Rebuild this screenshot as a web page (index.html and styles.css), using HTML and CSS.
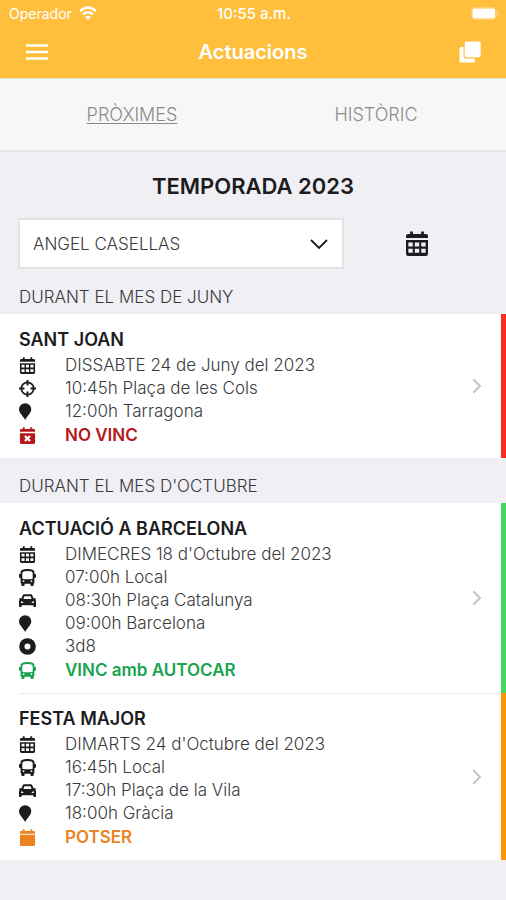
FILE: index.html
```html
<!DOCTYPE html>
<html lang="ca">
<head>
<meta charset="utf-8">
<meta name="viewport" content="width=device-width, initial-scale=1">
<title>Actuacions</title>
<link rel="stylesheet" href="styles.css">
</head>
<body>
<svg class="sprite" aria-hidden="true">
  <symbol id="calendar" viewBox="0 0 16 18">
    <path fill-rule="evenodd" d="M0 5V3.500Q0 2 1.500 2H3V.3h2V2h6V.3h2V2h1.500Q16 2 16 3.500V5zM0 6.500h16v10Q16 18 14.500 18h-13Q0 18 0 16.500zM1.700 8.300v2.900h3.200V8.300zm4.700 0v2.900h3.200V8.300zm4.700 0v2.900h3.200V8.300zM1.700 12.900v2.900h3.200v-2.900zm4.700 0v2.900h3.200v-2.900zm4.700 0v2.900h3.200v-2.900z"/>
  </symbol>
  <symbol id="calendar-plain" viewBox="0 0 16 18">
    <path d="M0 5V3.500Q0 2 1.500 2H3V.3h2V2h6V.3h2V2h1.500Q16 2 16 3.500V5zM0 6h16v10.500Q16 18 14.500 18h-13Q0 18 0 16.500z"/>
  </symbol>
  <symbol id="calendar-x" viewBox="0 0 16 18">
    <path d="M0 5V3.500Q0 2 1.500 2H3V.3h2V2h6V.3h2V2h1.500Q16 2 16 3.500V5zM0 6.500h16v10Q16 18 14.500 18h-13Q0 18 0 16.500z"/>
    <path d="M5.300 9.500l5.400 5.400m0-5.400l-5.400 5.400" stroke="#fff" stroke-width="2.400"/>
  </symbol>
  <symbol id="target" viewBox="0 0 18 18">
    <circle cx="9" cy="9" r="6.500" fill="none" stroke="currentColor" stroke-width="1.900"/>
    <path d="M9 0v5.800M9 12.200V18M0 9h5.800M12.200 9H18" stroke="currentColor" stroke-width="2.100"/>
  </symbol>
  <symbol id="pin" viewBox="0 0 14 18" preserveAspectRatio="xMinYMid">
    <path d="M6.500 18C5 14.500 0 11 0 6.700a6.500 6.500 0 0 1 13 0C13 11 8 14.500 6.500 18z"/>
  </symbol>
  <symbol id="bus" viewBox="0 0 18 18">
    <path fill-rule="evenodd" d="M9 0c4.500 0 7.300 1 7.300 3.300V5Q18 5 18 6.200v2.300q0 1.200-1.700 1.200v4.600q0 1-.8 1.300V17q0 1-1 1h-1.400q-1 0-1-1v-1.400H5.900V17q0 1-1 1H3.500q-1 0-1-1v-1.400q-.8-.3-.8-1.300V9.700Q0 9.700 0 8.500V6.200Q0 5 1.700 5V3.300C1.700 1 4.500 0 9 0zM3.500 4.500v5.700q2 .6 5.500.6t5.500-.6V4.500Q14.500 2 9 2T3.500 4.500zM4.800 12a.9.900 0 1 0 0 1.800.9.900 0 0 0 0-1.800zm8.400 0a.9.900 0 1 0 0 1.800.9.900 0 0 0 0-1.800z"/>
  </symbol>
  <symbol id="car" viewBox="0 0 18 18">
    <path fill-rule="evenodd" d="M5.500 2.500h7q1.200 0 1.700 1.200L15.400 6.700h1.700q.9 0 .7.800l-.4.900q.6.500.6 1.600v5.200q0 .8-.9.800h-1q-.9 0-.9-.8V14H2.800v1.200q0 .8-.9.800h-1Q0 16 0 15.200V10q0-1.100.6-1.600L.200 7.500Q0 6.700.9 6.700h1.700l1.200-3Q4.300 2.500 5.500 2.500zM5.700 4.500l-1 3h8.600l-1-3zM2 9.800l.3 1.900h2.600Q4.500 9.800 2 9.800zm14 0q-2.500 0-2.900 1.900h2.600z"/>
  </symbol>
  <symbol id="ring" viewBox="0 0 18 18">
    <circle cx="9" cy="9" r="6" fill="none" stroke="currentColor" stroke-width="5.600"/>
  </symbol>
  <symbol id="chevron" viewBox="0 0 10 16">
    <path d="M1.200 1.200L8 8l-6.800 6.800" fill="none" stroke="currentColor" stroke-width="2"/>
  </symbol>
</svg>

<header class="top">
  <div class="status">
    <span class="carrier">Operador
      <svg class="wifi" viewBox="0 0 18 14" aria-hidden="true"><path d="M1 5q8-7 16 0M4 8.300q5-4.300 10 0" fill="none" stroke="currentColor" stroke-width="2.400"/><path d="M6 11q3-2.600 6 0l-3 3z"/></svg>
    </span>
    <span class="clock">10:55 a.m.</span>
    <svg class="battery" viewBox="0 0 28 13" aria-hidden="true"><rect x=".5" y=".5" width="24.500" height="12" rx="3.500" fill="none" stroke="currentColor" opacity=".3"/><rect x="1.500" y="1.500" width="22.500" height="10" rx="2"/><path d="M26 4q2 1 2 2.500T26 9z" opacity=".4"/></svg>
  </div>
  <div class="nav">
    <button class="nav-button" type="button" aria-label="Menú">
      <svg class="burger" viewBox="0 0 24 16"><path d="M1 1.500h22M1 8h22M1 14.500h22" stroke="currentColor" stroke-width="2.400"/></svg>
    </button>
    <h1 class="nav-title">Actuacions</h1>
    <button class="nav-button end" type="button" aria-label="Copiar">
      <svg class="copy" viewBox="0 0 22 22"><path d="M2 6h2.500v9.500q0 2 2 2H16V20q0 1.500-1.500 1.500H2Q.500 21.500.500 20V7.500Q.500 6 2 6z"/><rect x="5.700" y=".5" width="16" height="15.800" rx="1.500"/></svg>
    </button>
  </div>
</header>

<nav class="tabs">
  <a class="tab active" href="#proximes">PRÒXIMES</a>
  <a class="tab" href="#historic">HISTÒRIC</a>
</nav>

<main id="proximes">
  <h2 class="season">TEMPORADA 2023</h2>
  <div class="filter">
    <div class="picker">
      <select class="person" aria-label="Persona"><option>ANGEL CASELLAS</option></select>
      <svg class="arrow" viewBox="0 0 18 10" aria-hidden="true"><path d="M1 1l8 8 8-8" fill="none" stroke="currentColor" stroke-width="1.800"/></svg>
    </div>
    <button class="open-calendar" type="button" aria-label="Calendari"><svg class="calendar-large"><use href="#calendar"/></svg></button>
  </div>

  <h3 class="month">DURANT EL MES DE JUNY</h3>
  <div class="list">
    <a class="event red" href="#sant-joan">
      <div class="body">
        <h4 class="name">SANT JOAN</h4>
        <div class="row"><svg class="icon"><use href="#calendar"/></svg>DISSABTE 24 de Juny del 2023</div>
        <div class="row"><svg class="icon"><use href="#target"/></svg>10:45h Plaça de les Cols</div>
        <div class="row"><svg class="icon"><use href="#pin"/></svg>12:00h Tarragona</div>
        <div class="row answer no"><svg class="icon"><use href="#calendar-x"/></svg>NO VINC</div>
      </div>
      <svg class="chevron"><use href="#chevron"/></svg>
    </a>
  </div>

  <h3 class="month">DURANT EL MES D'OCTUBRE</h3>
  <div class="list">
    <a class="event green" href="#barcelona">
      <div class="body">
        <h4 class="name">ACTUACIÓ A BARCELONA</h4>
        <div class="row"><svg class="icon"><use href="#calendar"/></svg>DIMECRES 18 d'Octubre del 2023</div>
        <div class="row"><svg class="icon"><use href="#bus"/></svg>07:00h Local</div>
        <div class="row"><svg class="icon"><use href="#car"/></svg>08:30h Plaça Catalunya</div>
        <div class="row"><svg class="icon"><use href="#pin"/></svg>09:00h Barcelona</div>
        <div class="row"><svg class="icon"><use href="#ring"/></svg>3d8</div>
        <div class="row answer yes"><svg class="icon"><use href="#bus"/></svg>VINC amb AUTOCAR</div>
      </div>
      <svg class="chevron"><use href="#chevron"/></svg>
    </a>
    <a class="event orange" href="#festa-major">
      <div class="body">
        <h4 class="name">FESTA MAJOR</h4>
        <div class="row"><svg class="icon"><use href="#calendar"/></svg>DIMARTS 24 d'Octubre del 2023</div>
        <div class="row"><svg class="icon"><use href="#bus"/></svg>16:45h Local</div>
        <div class="row"><svg class="icon"><use href="#car"/></svg>17:30h Plaça de la Vila</div>
        <div class="row"><svg class="icon"><use href="#pin"/></svg>18:00h Gràcia</div>
        <div class="row answer maybe"><svg class="icon"><use href="#calendar-plain"/></svg>POTSER</div>
      </div>
      <svg class="chevron"><use href="#chevron"/></svg>
    </a>
  </div>
</main>
</body>
</html>
```
FILE: styles.css
```css
* {
  box-sizing: border-box;
}

body {
  margin: 0;
  background: #efeff4;
  color: #1c1c1e;
  font-family: Inter, "Liberation Sans", sans-serif;
  font-size: 17px;
  font-weight: 300;
}

h1, h2, h3, h4 {
  margin: 0;
}

a {
  color: inherit;
  text-decoration: none;
}

button {
  padding: 0;
  border: 0;
  background: none;
  color: inherit;
}

svg {
  display: block;
  flex: none;
  fill: currentColor;
}

.sprite {
  position: absolute;
  width: 0;
  height: 0;
}

.top {
  background: #ffbf3d;
  color: #fff;
}

.status {
  display: grid;
  grid-template-columns: 1fr auto 1fr;
  align-items: center;
  height: 26px;
  padding: 0 7px 0 9px;
  font-size: 14px;
}

.carrier {
  display: flex;
  align-items: center;
  gap: 7px;
  font-weight: 400;
}

.clock {
  font-size: 15px;
  font-weight: 500;
}

.wifi {
  width: 18px;
  height: 14px;
}

.battery {
  width: 28px;
  height: 13px;
  justify-self: end;
}

.nav {
  display: grid;
  grid-template-columns: 1fr auto 1fr;
  align-items: center;
  height: 52px;
  padding: 0 25px;
}

.nav-button {
  justify-self: start;
}

.nav-button.end {
  justify-self: end;
}

.nav-title {
  font-size: 20px;
  font-weight: 600;
}

.burger {
  width: 24px;
  height: 16px;
}

.copy {
  width: 22px;
  height: 22px;
}

.tabs {
  display: flex;
  height: 74px;
  border-top: 1px solid #e9e5dc;
  border-bottom: 2px solid #e4e4e6;
  background: #f7f7f7;
  color: #8b8b8b;
  font-size: 18px;
}

.tab {
  display: flex;
  flex: 1;
  align-items: center;
  justify-content: center;
  padding-left: 10px;
}

.tab + .tab {
  padding: 0 8px 0 0;
}

.active {
  text-decoration: underline;
  text-underline-offset: 2px;
}

.season {
  padding-top: 18px;
  font-size: 22px;
  font-weight: 600;
  line-height: 32px;
  text-align: center;
}

.filter {
  display: flex;
  padding: 16px 16px 0 18px;
}

.picker {
  position: relative;
  flex: 0 0 69%;
}

.person {
  width: 100%;
  height: 51px;
  padding: 0 40px 0 13px;
  border: 2px solid #e2e2e5;
  border-radius: 0;
  appearance: none;
  background: #fff;
  color: #3a3a3c;
  font: inherit;
}

.arrow {
  position: absolute;
  top: 21px;
  right: 16px;
  width: 18px;
  height: 10px;
  pointer-events: none;
}

.open-calendar {
  display: flex;
  flex: 1;
  align-items: center;
  justify-content: center;
}

.calendar-large {
  width: 22px;
  height: 25px;
}

.month {
  padding: 16px 19px 5px;
  color: #3a3a3c;
  font-size: 17px;
  font-weight: 300;
  line-height: 24px;
}

.list {
  background: #fff;
}

.event {
  display: flex;
  align-items: center;
  padding-right: 19px;
  border-right: 5px solid;
}

.red {
  border-color: #ff2d20;
}

.green {
  border-color: #43d95e;
}

.orange {
  border-color: #ff9500;
}

.body {
  flex: 1;
  margin-left: 19px;
  padding: 11px 0;
}

.event + .event {
  background: linear-gradient(#ececec, #ececec) 19px 0 / 100% 1px no-repeat;
}

.name {
  font-size: 18px;
  font-weight: 600;
  line-height: 29px;
}

.row {
  display: flex;
  align-items: center;
  gap: 29px;
  color: #3a3a3c;
  line-height: 23px;
}

.icon {
  width: 17px;
  height: 17px;
  color: #1c1c1e;
}

.answer {
  font-weight: 600;
  line-height: 24px;
}

.answer .icon {
  color: inherit;
}

.no {
  color: #b5171b;
}

.yes {
  color: #17a34f;
}

.maybe {
  color: #ea8320;
}

.chevron {
  width: 10px;
  height: 16px;
  color: #c4c4c6;
}
```
